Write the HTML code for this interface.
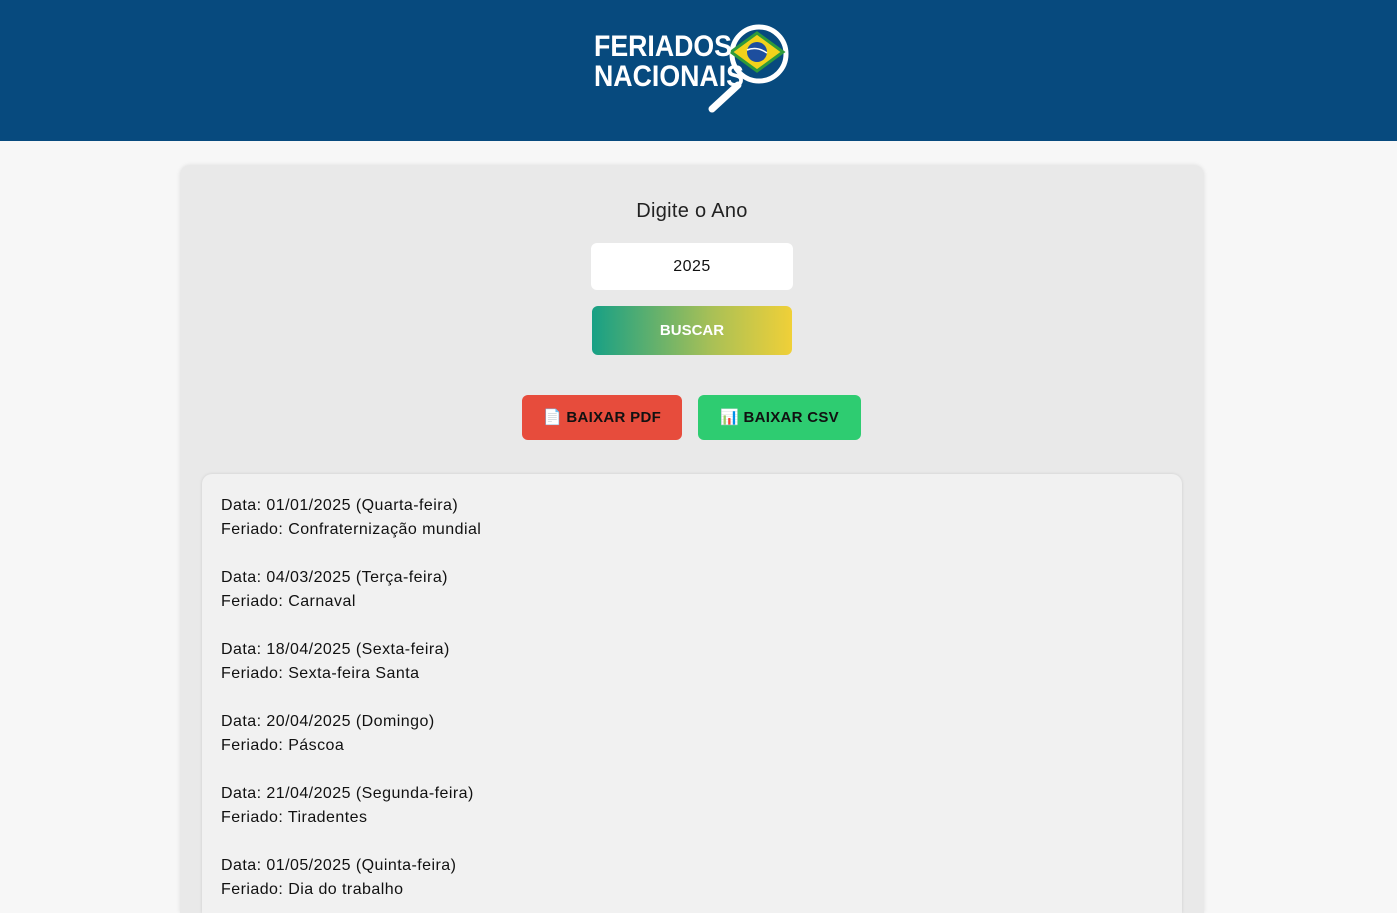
<!DOCTYPE html>
<html><head><meta charset="utf-8"><style>
*{box-sizing:border-box;margin:0;padding:0}
html{height:913px;overflow:hidden}
body{width:1397px;height:913px;overflow:hidden;background:#f7f7f7;font-family:"Liberation Sans",sans-serif;color:#111;position:relative}
header{height:141px;background:#074a7e;position:relative}
.card{position:absolute;left:180px;top:165px;width:1024px;height:748px;background:#e9e9e9;border-radius:10px 10px 0 0;box-shadow:0 0 4px rgba(0,0,0,.1)}
h2{position:absolute;top:200px;left:542px;width:300px;text-align:center;font-size:20px;font-weight:normal;color:#222;letter-spacing:0.3px}
.inp{position:absolute;left:591px;top:243px;width:202px;height:47px;background:#fff;border-radius:6px;text-align:center;line-height:47px;font-size:16px;letter-spacing:0.5px}
.bus{position:absolute;left:592px;top:306px;width:200px;height:49px;border-radius:6px;background:linear-gradient(90deg,#17a085,#a9c056 60%,#f0d038);color:#fff;font-weight:bold;font-size:15px;text-align:center;line-height:49px}
.b{position:absolute;top:395px;height:45px;border-radius:6px;font-weight:bold;font-size:15px;line-height:45px;text-align:center;color:#111;letter-spacing:0.3px}
.list{position:absolute;left:202px;top:474px;width:980px;height:439px;overflow:hidden;background:#f1f1f1;border-radius:10px 10px 0 0;box-shadow:0 0 3px rgba(0,0,0,.12);padding:20px 19px}
.list div{font-size:16px;line-height:24px;margin-bottom:24px;letter-spacing:0.45px}
</style></head><body>
<header>
<svg width="1397" height="141" style="position:absolute;left:0;top:0">
<circle cx="759" cy="54" r="27" fill="none" stroke="#fff" stroke-width="5"/>
<line x1="738" y1="85" x2="712" y2="109" stroke="#fff" stroke-width="7" stroke-linecap="round"/>
<polygon points="731,52 757,33 783,52 757,71" fill="#f2d21b" stroke="#2e9a3a" stroke-width="3"/>
<circle cx="757" cy="52" r="10" fill="#1d4e9e"/>
<path d="M747 50 Q757 46 767 53" stroke="#fff" stroke-width="1.5" fill="none"/>
<text x="594" y="56" fill="#fff" font-family="Liberation Sans" font-weight="bold" font-size="30" textLength="138" lengthAdjust="spacingAndGlyphs">FERIADOS</text>
<text x="594" y="86" fill="#fff" font-family="Liberation Sans" font-weight="bold" font-size="30" textLength="150" lengthAdjust="spacingAndGlyphs">NACIONAIS</text>
</svg>
</header>
<div class="card"></div>
<h2>Digite o Ano</h2>
<div class="inp">2025</div>
<div class="bus">BUSCAR</div>
<div class="b" style="left:522px;width:160px;background:#e74c3c">📄 BAIXAR PDF</div>
<div class="b" style="left:698px;width:163px;background:#2ecc71">📊 BAIXAR CSV</div>
<div class="list">
<div>Data: 01/01/2025 (Quarta-feira)<br>Feriado: Confraternização mundial</div>
<div>Data: 04/03/2025 (Terça-feira)<br>Feriado: Carnaval</div>
<div>Data: 18/04/2025 (Sexta-feira)<br>Feriado: Sexta-feira Santa</div>
<div>Data: 20/04/2025 (Domingo)<br>Feriado: Páscoa</div>
<div>Data: 21/04/2025 (Segunda-feira)<br>Feriado: Tiradentes</div>
<div>Data: 01/05/2025 (Quinta-feira)<br>Feriado: Dia do trabalho</div>
</div>
</body></html>
